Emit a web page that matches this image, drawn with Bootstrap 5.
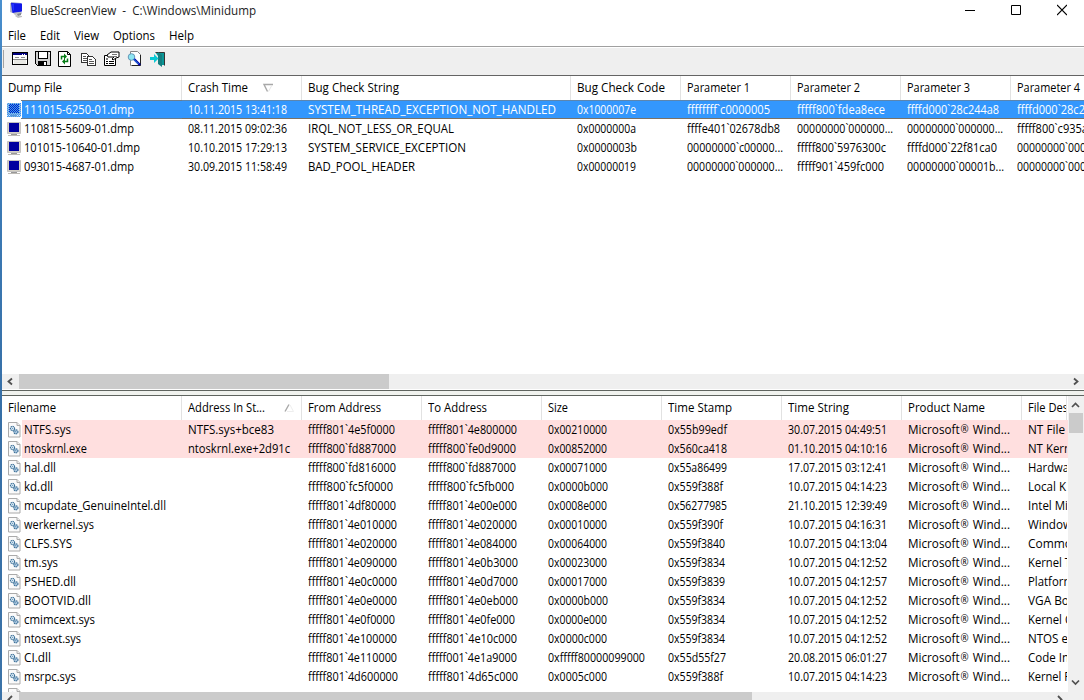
<!DOCTYPE html>
<html lang="en">
<head>
<meta charset="utf-8">
<title>BlueScreenView</title>
<link href="https://cdn.jsdelivr.net/npm/bootstrap@5.3.0/dist/css/bootstrap.min.css" rel="stylesheet">
<style>
html,body{height:100%}
body{font:12px/19px "Open Sans","Noto Sans",sans-serif;color:#000;background:#fff;cursor:default}
.app{width:1084px;height:700px;border-left:2px solid #3c7ebd;border-image:linear-gradient(#4a90cf,#3e80bd 12%,#376fa6 60%,#3b73a8) 1}
svg{display:block;flex:none}
.fit{display:inline-block;transform-origin:0 50%;white-space:pre}
.reg{font-size:10px;line-height:1;vertical-align:1px;padding:0 1px}
.titlebar{height:24px;padding:0 17px 0 6px}
.titlebar .fit{color:#222}
.caption-icons{gap:36px}
.menus{height:22px;padding:2px 0 0 6px;gap:14px}
.tools{height:29px;border-top:1px solid #a0a0a0;background:#efefef;box-shadow:inset 0 1px #fff;padding:3px 0 0 1px}
.grip{width:1px;height:18px;background:#a2a2a2;margin-right:8px}
.pane-top{height:316px;border-top:1px solid #646464;border-bottom:1px solid #5f645f}
.splitter{height:4px;background:#f0f2ee}
.pane-bottom{height:305px;border-top:1px solid #5f645f}
.heads{height:24px;line-height:24px}
.cellbox{flex:none;overflow:hidden;padding-left:6px;white-space:nowrap}
.heads .cellbox{border-right:1px solid #e2e2e2;display:flex}
.line{height:19px}
.line .lead-cell{display:flex;padding-left:5px}
.line .lead-cell .fit{margin-left:2px}
.picked{color:#fff;background:linear-gradient(90deg,#fff 20px,#3397fd 20px)}
.picked .cellbox{border-top:1px solid #5d86ae;border-bottom:1px solid #7b7266;line-height:17px}
.picked .lead-cell{border-image:linear-gradient(90deg,transparent 20px,#6b7d8d 20px) 1}
.stack{background:linear-gradient(90deg,#fff 20px,#ffdfdf 20px)}
.hbar{background:#efefef;height:15px}
.thumb{background:#cbcbcb}
.vbar{width:16px;background:#f0f0f0}
</style>
<script src="https://cdn.jsdelivr.net/npm/bootstrap@5.3.0/dist/js/bootstrap.bundle.min.js"></script>
</head>
<body>
<svg width="0" height="0" class="position-absolute">
<defs>
<pattern id="dots" width="2" height="2" patternUnits="userSpaceOnUse"><rect width="2" height="2" fill="#3397fd" opacity=".25"/><rect width="1" height="1" fill="#3397fd"/><rect x="1" y="1" width="1" height="1" fill="#3397fd"/></pattern>
<symbol id="pc" viewBox="0 0 16 19"><path d="M.5 3.500h13v11H.5z" fill="#d4d0c4" stroke="#c4c2c0"/><path d="M2 4h10v9H2z" fill="#0000a0"/><path d="M4 15h6v1H4z" fill="#989898"/><path d="M1 16h12v1H1z" fill="#bdbab5"/></symbol>
<symbol id="pcsel" viewBox="0 0 16 19"><use href="#pc" width="16" height="19"/><path d="M0 3h14v14H0z" fill="url(#dots)"/></symbol>
<symbol id="sysfile" viewBox="0 0 16 19"><path d="M1.500 2.500h8.500l3 3v11.500h-11.500z" fill="#fafafa" stroke="#aaa"/><path d="M10 2.500v3h3" fill="#eee" stroke="#aaa"/><circle cx="5.500" cy="8.500" r="2.100" fill="#d5e5f0" stroke="#3c7199" stroke-width="1.100" stroke-dasharray="1.300 .5"/><circle cx="8.900" cy="11.800" r="2.100" fill="#a9c4dc" stroke="#3c7199" stroke-width="1.100" stroke-dasharray="1.300 .5"/><path d="M5 8h1v1H5zM8 11h1v1H8z" fill="#6e9fc5"/></symbol>
</defs></svg>

<main class="app d-flex flex-column overflow-hidden">
<header class="titlebar d-flex justify-content-between">
 <div class="d-flex">
  <svg width="16" height="19" viewBox="0 0 16 19"><path d="M3 2l10 1v9l1 1H5L3 12z" fill="#9fa5d3"/><path d="M3 3l11 .5v8L4.500 13z" fill="#1018e8"/><path d="M4 4l2 0v6l-1 1z" fill="#2534ff"/><path d="M2 3h1v8l1 2-2-1zM5 13l8-1 1 2-7 1zM8 15l6 1v1l-4 1-3-2z" fill="#bfc0c3"/><path d="M9 14l4-1v2l-3 1z" fill="#85888e"/></svg>
  <span class="fit" style="margin:1px 0 0 6px" data-w="226">BlueScreenView  -  C:\Windows\Minidump</span>
 </div>
 <div class="caption-icons d-flex">
  <svg width="10" height="20" viewBox="0 0 10 20"><path d="M0 10.500h10" stroke="#000"/></svg>
  <svg width="10" height="20" viewBox="0 0 10 20"><path d="M.5 5.500h9v9h-9z" fill="none" stroke="#000"/></svg>
  <svg width="10" height="20" viewBox="0 0 10 20"><path d="M0 5l10 10M10 5L0 15" stroke="#000" stroke-width="1.200"/></svg>
 </div>
</header>
<nav class="menus d-flex"><span class="fit" data-w="18">File</span><span class="fit" data-w="20">Edit</span><span class="fit" data-w="25">View</span><span class="fit" data-w="42">Options</span><span class="fit" data-w="25">Help</span></nav>
<div class="tools d-flex" role="toolbar">
 <div class="grip"></div>
 <div class="d-flex" style="gap:7px;padding-top:1px">
  <svg width="16" height="18" viewBox="0 0 16 18" shape-rendering="crispEdges"><path d="M.5 1.500h15v12H.5z" fill="#fff" stroke="#000"/><path d="M1 2h14v2H1z" fill="#000080"/><path d="M10 3h1v1h-1zM12 3h1v1h-1z" fill="#fff"/><path d="M3 6h4v1H3zM9 6h4v1H9zM1 8h14v1H1z" fill="#8a8a8a"/><path d="M2 9h12v4H2z" fill="#e8e8e4"/></svg>
  <svg width="16" height="18" viewBox="0 0 16 18" shape-rendering="crispEdges"><path d="M.5 .500h15v14H2.500l-2-2z" fill="#d0d0d0" stroke="#000"/><path d="M3.500 .500h9v7h-9z" fill="#fff" stroke="#000"/><path d="M3 10h9v4H3z" fill="#000"/><path d="M9 11h2v3H9zM14 2h1v1h-1z" fill="#fff"/></svg>
  <svg width="16" height="18" viewBox="0 0 16 18"><path d="M.5 .500h9l3 3v12H.5z" fill="#fff" stroke="#000"/><path d="M9.500 .500v3h3" fill="none" stroke="#000"/><path d="M3.500 8.500V5.500h3M9.500 7.500v3h-3" fill="none" stroke="#087d18" stroke-width="1.500"/><path d="M6 2.500l3 3-3 3zM7 7.500l-3 3 3 3z" fill="#087d18"/></svg>
  <svg width="16" height="18" viewBox="0 0 16 18" shape-rendering="crispEdges"><path d="M.5 2.500h5l3 3v6h-8z" fill="#fff" stroke="#333"/><path d="M2 5h3v1H2zM2 7h4v1H2zM2 9h4v1H2z" fill="#555"/><path d="M6.500 5.500h5l3 3v6h-8z" fill="#fff" stroke="#333"/><path d="M8 8h3v1H8zM8 10h5v1H8zM8 12h5v1H8z" fill="#555"/></svg>
  <svg width="16" height="18" viewBox="0 0 16 18"><path d="M.5 4.500h11v10H.5z" fill="#fff" stroke="#000"/><path d="M3 4l4-3h8v5l-3 1-3 2-1-1 2-2H4z" fill="#fff" stroke="#000"/><path d="M2 8h2M2 10.500h2M2 12.500h2M5 10.500h5M5 12.500h5" stroke="#000"/><path d="M8 3.500h5M9 5.500h4" stroke="#777"/></svg>
  <svg width="16" height="18" viewBox="0 0 16 18"><path d="M3.500 .500h7l3 3v11h-10z" fill="#fff" stroke="#858585"/><path d="M13.500 4v10.500H5" fill="none" stroke="#222"/><circle cx="4.500" cy="6" r="3.300" fill="#8de6f2" stroke="#6697b7"/><path d="M7 8l6 6" stroke="#0000b0" stroke-width="2.400"/><path d="M6.500 8l5 5" stroke="#39c9ef" stroke-width=".8"/></svg>
  <svg width="16" height="18" viewBox="0 0 16 18"><path d="M5.500 1.500h9v13" fill="#0a9797" stroke="#333"/><path d="M8 1l4 3v12l-4-3z" fill="#147e80"/><path d="M12 2h2v12h-2z" fill="#0a9797"/><path d="M0 6h4V3l4.500 4.500L4 12V9H0z" fill="#08c8d4"/></svg>
 </div>
</div>

<section class="pane-top d-flex flex-column">
 <div class="flex-grow-1 overflow-hidden" id="dumps"></div>
 <div class="hbar d-flex" style="margin-bottom:1px">
  <svg width="17" height="15" viewBox="0 0 17 15"><path d="M10 4.500L6.500 7.500L10 10.500" fill="none" stroke="#505050" stroke-width="1.800"/></svg>
  <div class="thumb" style="width:370px"></div>
  <svg class="ms-auto" width="17" height="15" viewBox="0 0 17 15"><path d="M7 4.500l3.500 3L7 10.500" fill="none" stroke="#505050" stroke-width="1.800"/></svg>
 </div>
</section>
<div class="splitter"></div>
<section class="pane-bottom d-flex overflow-hidden">
 <div class="d-flex flex-column" style="width:1066px">
  <div class="overflow-hidden flex-shrink-0" style="height:296px" id="drivers"></div>
  <div class="hbar d-flex flex-shrink-0">
   <svg width="17" height="15" viewBox="0 0 17 15"><path d="M10 4L6.500 7.500L10 11" fill="none" stroke="#505050" stroke-width="1.800"/></svg>
   <div class="thumb" style="width:733px"></div>
   <svg class="ms-auto" width="17" height="15" viewBox="0 0 17 15"><path d="M7 4l3.500 3.500L7 11" fill="none" stroke="#505050" stroke-width="1.800"/></svg>
  </div>
 </div>
 <div class="vbar d-flex flex-column">
  <svg width="16" height="17" viewBox="0 0 16 17"><path d="M4 11l3.500-3.500L11 11" fill="none" stroke="#505050" stroke-width="1.700"/></svg>
  <div class="thumb" style="height:20px;width:14px;margin-left:1px"></div>
  <svg style="margin-top:241px" width="16" height="17" viewBox="0 0 16 17"><path d="M4 6.500l3.500 3.500L11 6.500" fill="none" stroke="#505050" stroke-width="1.700"/></svg>
 </div>
</section>
</main>
<script>
// Pixel advances of the UI face at 12px
const adv={};
[[3," .:`iIlj"],[4,"frtJ"],[5,"-_sxz\\"],[6,"0123456789aceekvySEFL"],[7,"bdghnopquBKPRTXYZ"],[8,"ACDGUV+"],[9,"wHNOQ"],[11,"mMW®"]].forEach(([w,s])=>[...s].forEach(c=>adv[c]=w));
const width=t=>[...t].reduce((n,c)=>n+(adv[c]||6),0)-(/^[A-Z_]+_[A-Z_]+$/.test(t)?1:0);
const txt=t=>t?`<span class="fit" data-w="${width(t)}">${t.replace("®",'<span class="reg">®</span>')}</span>`:"";
function list(id,cols,rows,sort,icon,mark){
 const sorter={1:sort};
 let h='<div class="heads d-flex">'+cols.map(([w,t],i)=>`<div class="cellbox" style="width:${w}px">${txt(t)}${sorter[i]||""}</div>`).join("")+"</div>";
 rows.forEach((r,k)=>{
  h+=`<div class="line d-flex ${mark(k)}">`+r.map((t,i)=>i?`<div class="cellbox" style="width:${cols[i][0]}px">${txt(t)}</div>`
   :`<div class="cellbox lead-cell" style="width:${cols[0][0]}px"><svg width="15" height="19" viewBox="0 0 15 19"${mark(k)=="picked"?' style="margin-top:-1px"':''}><use href="#${icon(k)}" width="16" height="19"/></svg>${txt(t)}</div>`).join("")+"</div>";
 });
 document.getElementById(id).innerHTML=h;
}
const T=s=>s.trim().split("\n").map(r=>r.split("|"));
list("dumps",[[180,"Dump File"],[120,"Crash Time"],[269,"Bug Check String"],[110,"Bug Check Code"],[110,"Parameter 1"],[110,"Parameter 2"],[110,"Parameter 3"],[74,"Parameter 4"]],T(`
111015-6250-01.dmp|10.11.2015 13:41:18|SYSTEM_THREAD_EXCEPTION_NOT_HANDLED|0x1000007e|ffffffff\`c0000005|fffff800\`fdea8ece|ffffd000\`28c244a8|ffffd000\`28c2
110815-5609-01.dmp|08.11.2015 09:02:36|IRQL_NOT_LESS_OR_EQUAL|0x0000000a|ffffe401\`02678db8|00000000\`000000...|00000000\`000000...|fffff800\`c935a
101015-10640-01.dmp|10.10.2015 17:29:13|SYSTEM_SERVICE_EXCEPTION|0x0000003b|00000000\`c00000...|fffff800\`5976300c|ffffd000\`22f81ca0|00000000\`000
093015-4687-01.dmp|30.09.2015 11:58:49|BAD_POOL_HEADER|0x00000019|00000000\`000000...|fffff901\`459fc000|00000000\`00001b...|00000000\`000`),
'<svg style="margin:7px 0 0 14px" width="12" height="10" viewBox="0 0 12 10"><path d="M11 1.500H2L5.500 8.500" fill="none" stroke="#a8a8a8" stroke-width="1.400"/><path d="M10 2L6.500 8.500" stroke="#e6e6e6"/></svg>',k=>k?"pc":"pcsel",k=>k?"":"picked");
list("drivers",[[180,"Filename"],[120,"Address In St..."],[120,"From Address"],[120,"To Address"],[120,"Size"],[120,"Time Stamp"],[120,"Time String"],[120,"Product Name"],[45,"File Des"]],T(`
NTFS.sys|NTFS.sys+bce83|fffff801\`4e5f0000|fffff801\`4e800000|0x00210000|0x55b99edf|30.07.2015 04:49:51|NT File
ntoskrnl.exe|ntoskrnl.exe+2d91c|fffff800\`fd887000|fffff800\`fe0d9000|0x00852000|0x560ca418|01.10.2015 04:10:16|NT Kern
hal.dll||fffff800\`fd816000|fffff800\`fd887000|0x00071000|0x55a86499|17.07.2015 03:12:41|Hardwa
kd.dll||fffff800\`fc5f0000|fffff800\`fc5fb000|0x0000b000|0x559f388f|10.07.2015 04:14:23|Local K
mcupdate_GenuineIntel.dll||fffff801\`4df80000|fffff801\`4e00e000|0x0008e000|0x56277985|21.10.2015 12:39:49|Intel Mi
werkernel.sys||fffff801\`4e010000|fffff801\`4e020000|0x00010000|0x559f390f|10.07.2015 04:16:31|Window
CLFS.SYS||fffff801\`4e020000|fffff801\`4e084000|0x00064000|0x559f3840|10.07.2015 04:13:04|Commo
tm.sys||fffff801\`4e090000|fffff801\`4e0b3000|0x00023000|0x559f3834|10.07.2015 04:12:52|Kernel T
PSHED.dll||fffff801\`4e0c0000|fffff801\`4e0d7000|0x00017000|0x559f3839|10.07.2015 04:12:57|Platform
BOOTVID.dll||fffff801\`4e0e0000|fffff801\`4e0eb000|0x0000b000|0x559f3834|10.07.2015 04:12:52|VGA Bo
cmimcext.sys||fffff801\`4e0f0000|fffff801\`4e0fe000|0x0000e000|0x559f3834|10.07.2015 04:12:52|Kernel C
ntosext.sys||fffff801\`4e100000|fffff801\`4e10c000|0x0000c000|0x559f3834|10.07.2015 04:12:52|NTOS e
CI.dll||fffff801\`4e110000|fffff001\`4e1a9000|0xfffff80000099000|0x55d55f27|20.08.2015 06:01:27|Code In
msrpc.sys||fffff801\`4d600000|fffff801\`4d65c000|0x0005c000|0x559f388f|10.07.2015 04:14:23|Kernel F
|||||||`).map((r,k)=>{r.splice(7,0,k<14?"Microsoft® Wind...":"");return r}),
'<svg class="ms-auto" style="margin:7px 6px 0 0" width="11" height="10" viewBox="0 0 11 10"><path d="M1 8.500L5 1.500" stroke="#a8a8a8" stroke-width="1.400"/><path d="M6 2l3.500 6.500H3" fill="none" stroke="#eee"/></svg>',()=>"sysfile",k=>k<2?"stack":"");
// Condense each run of text to its advance, keeping the layout box the same width
document.querySelectorAll(".fit").forEach(e=>{
 const n=e.getBoundingClientRect().width,w=+e.dataset.w;
 e.style.width=w+"px";e.style.transform=`scaleX(${w/n})`;e.style.flex="none";
});
</script>
</body>
</html>
